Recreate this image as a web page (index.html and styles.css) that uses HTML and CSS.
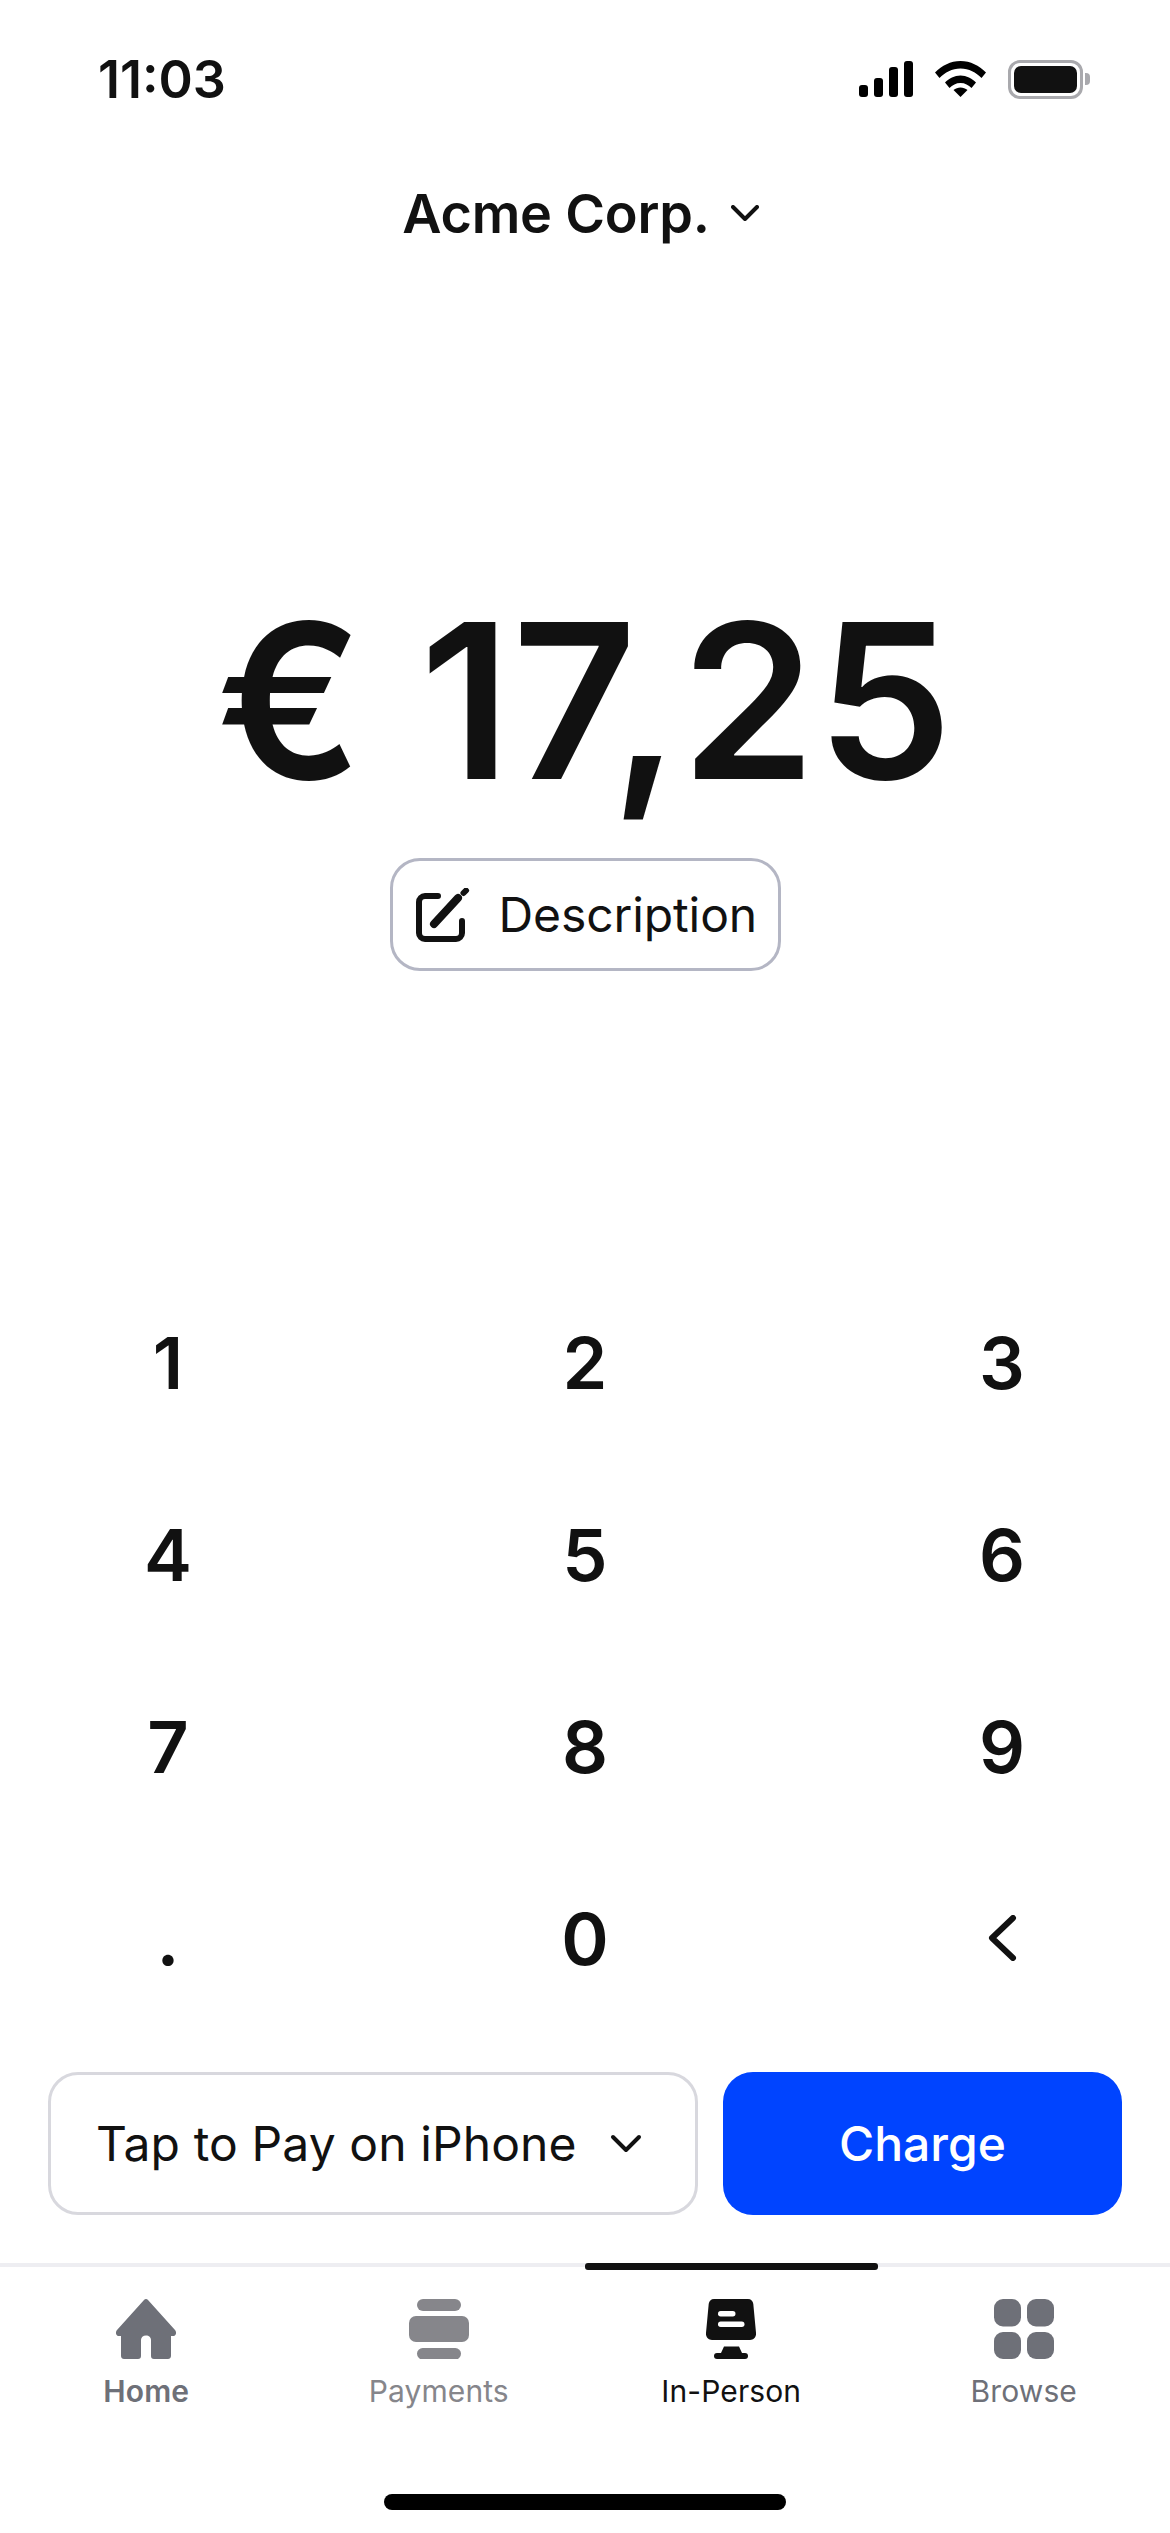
FILE: index.html
```html
<!DOCTYPE html>
<html>
    <head>
        <meta charset="utf-8">
        <title>In-Person</title>
        <link rel="stylesheet" href="styles.css">
    </head>
    <body>
        <div class="screen">
            <div class="status-bar">
                <span class="time">11:03</span>
                <div class="status-icons">
                    <div class="signal"><i></i><i></i><i></i><i></i></div>
                    <svg class="wifi" viewBox="0 0 51 36" width="51" height="36">
                        <path d="M0 11.5C7 4.5 15.5 0 25.5 0S44 4.5 51 11.5L46.5 17C41 11.5 34 7.5 25.5 7.5S10 11.5 4.5 17Z"/>
                        <path d="M10 21.5C14 17.5 19.5 14.5 25.5 14.5S37 17.5 41 21.5L36.5 27C33.5 24 30 22 25.5 22S17.5 24 14.5 27Z"/>
                        <path d="M18.5 29C20.5 27.5 23 26.5 25.5 26.5S30.5 27.5 32.5 29L25.5 36Z"/>
                    </svg>
                    <div class="battery"><div class="battery-level"></div></div>
                </div>
            </div>

            <div class="account">
                <span>Acme Corp.</span>
                <svg class="chevron" viewBox="0 0 28 16" width="28" height="16"><path d="M2 2L14 14L26 2"/></svg>
            </div>

            <div class="charge-amount">
                <div class="amount">€ 17,25</div>
                <button type="button" class="description">
                    <svg viewBox="0 0 54 54" width="54" height="54">
                        <path class="edit-box" d="M22 8H9A6 6 0 0 0 3 14V45A6 6 0 0 0 9 51H40A6 6 0 0 0 46 45V33"/>
                        <path class="edit-pen" d="M18 36L42 10"/>
                        <path class="edit-tip" d="M47.5 5L50 2.5"/>
                    </svg>
                    <span>Description</span>
                </button>
            </div>

            <div class="keypad">
                <button type="button">1</button>
                <button type="button">2</button>
                <button type="button">3</button>
                <button type="button">4</button>
                <button type="button">5</button>
                <button type="button">6</button>
                <button type="button">7</button>
                <button type="button">8</button>
                <button type="button">9</button>
                <button type="button">.</button>
                <button type="button">0</button>
                <button type="button" aria-label="Delete">
                    <svg class="back" viewBox="0 0 30 46" width="30" height="46"><path d="M26 3L5 23L26 43"/></svg>
                </button>
            </div>

            <div class="actions">
                <button type="button" class="reader">
                    <span>Tap to Pay on iPhone</span>
                    <svg class="chevron" viewBox="0 0 32 20" width="32" height="20"><path d="M3 3L16 16L29 3"/></svg>
                </button>
                <button type="button" class="charge">Charge</button>
            </div>

            <nav class="tabs">
                <a class="tab tab-home">
                    <svg viewBox="0 0 60 60" width="60" height="60">
                        <path d="M28 1C29 -0.3 31 -0.3 32 1L59 31C61 33.5 60 37 57 37H55V57C55 59 53.5 60 52 60H38C36 60 35 59 35 57V41C35 38.5 33 36.5 30 36.5S25 38.5 25 41V57C25 59 24 60 22 60H8C6.5 60 5 59 5 57V37H3C0 37 -1 33.5 1 31Z"/>
                    </svg>
                    <span>Home</span>
                </a>
                <a class="tab tab-payments">
                    <svg viewBox="0 0 60 60" width="60" height="60">
                        <rect x="8" y="0" width="44" height="12" rx="6"/>
                        <rect x="0" y="17" width="60" height="26" rx="7"/>
                        <rect x="8" y="49" width="44" height="11.5" rx="5.7"/>
                    </svg>
                    <span>Payments</span>
                </a>
                <a class="tab tab-active">
                    <svg viewBox="0 0 50 60" width="50" height="60">
                        <path d="M8 0H42C45 0 47 2 47.3 5L50 34C50.3 38 48 41 44 41H6C2 41 -0.3 38 0 34L2.7 5C3 2 5 0 8 0Z"/>
                        <rect class="cut" x="12" y="12" width="17.5" height="5.5" rx="2.7"/>
                        <rect class="cut" x="12" y="22.5" width="26.5" height="5.5" rx="2.7"/>
                        <path d="M15 54L18 47.5H33L36 54Z"/>
                        <rect x="8" y="54" width="34" height="6" rx="3"/>
                    </svg>
                    <span>In-Person</span>
                </a>
                <a class="tab tab-browse">
                    <svg viewBox="0 0 60 60" width="60" height="60">
                        <rect x="0" y="0" width="27" height="27.5" rx="9"/>
                        <rect x="33" y="0" width="27" height="27.5" rx="9"/>
                        <rect x="0" y="33" width="27" height="27" rx="9"/>
                        <rect x="33" y="33" width="27" height="27" rx="9"/>
                    </svg>
                    <span>Browse</span>
                </a>
            </nav>

            <div class="home-bar"></div>
        </div>
    </body>
</html>
```

FILE: styles.css
```css
* { box-sizing: border-box; }

html, body {
    margin: 0;
    background: #fff;
}

body {
    color: #111;
    font-family: Inter, "Noto Sans", sans-serif;
}

button {
    background: none;
    border: 0;
    color: inherit;
    font: inherit;
    padding: 0;
}

.screen {
    display: flex;
    flex-direction: column;
    height: 2533px;
    overflow: hidden;
    width: 1170px;
}

/* status bar */
.status-bar {
    align-items: center;
    display: flex;
    height: 158px;
    justify-content: space-between;
    padding: 0 87px 0 98px;
}

.time {
    font-size: 52px;
    font-weight: 600;
}

.status-icons {
    align-items: center;
    display: flex;
    gap: 22px;
}

.signal {
    align-items: flex-end;
    display: flex;
    gap: 6px;
    height: 36px;
    width: 54px;
}

.signal i {
    background: #000;
    border-radius: 3px;
    display: block;
    flex: 1;
}

.signal i:nth-child(1) { height: 12px; }
.signal i:nth-child(2) { height: 19px; }
.signal i:nth-child(3) { height: 30px; }
.signal i:nth-child(4) { height: 36px; }

.wifi { fill: #000; }

.battery {
    border: 3px solid #a9a9ad;
    border-radius: 12px;
    height: 39px;
    padding: 3px;
    position: relative;
    width: 75px;
}

.battery::after {
    background: #a9a9ad;
    border-radius: 0 4px 4px 0;
    content: "";
    height: 12px;
    position: absolute;
    right: -10px;
    top: 10px;
    width: 5px;
}

.battery-level {
    background: #111;
    border-radius: 7px;
    height: 100%;
}

/* account switcher */
.account {
    align-items: center;
    display: flex;
    font-size: 54px;
    font-weight: 600;
    gap: 21px;
    height: 110px;
    justify-content: center;
    letter-spacing: -0.2px;
    padding-right: 9px;
}

.chevron {
    fill: none;
    stroke: #111;
    stroke-linecap: round;
    stroke-linejoin: round;
    stroke-width: 4;
}

/* amount */
.charge-amount {
    align-items: center;
    display: flex;
    flex-direction: column;
    height: 1000px;
    padding-top: 325px;
}

.amount {
    font-size: 216px;
    font-weight: 600;
    letter-spacing: 1.2px;
    line-height: 216px;
}

.description {
    align-items: center;
    border: 3px solid #b4b6c4;
    border-radius: 30px;
    display: flex;
    font-size: 48px;
    gap: 29px;
    height: 113px;
    letter-spacing: -0.1px;
    margin-top: 49px;
    padding: 0 23px;
    width: 391px;
}

.description svg {
    fill: none;
    flex: none;
    stroke: #111;
    stroke-linecap: round;
    stroke-linejoin: round;
}

.edit-box { stroke-width: 6; }
.edit-pen { stroke-width: 8; }
.edit-tip { stroke-width: 6; }

/* keypad */
.keypad {
    display: grid;
    grid-auto-rows: 192px;
    grid-template-columns: repeat(3, 120px);
    justify-content: space-between;
    padding: 0 108px;
}

.keypad button {
    align-items: center;
    display: flex;
    font-size: 72px;
    font-weight: 600;
    justify-content: center;
    padding-bottom: 4px;
}

.back {
    fill: none;
    stroke: #111;
    stroke-linecap: round;
    stroke-linejoin: round;
    stroke-width: 6;
}

/* bottom actions */
.actions {
    display: flex;
    gap: 25px;
    height: 143px;
    margin-top: 36px;
    padding: 0 48px;
}

.reader {
    align-items: center;
    border: 3px solid #d8d8de;
    border-radius: 30px;
    display: flex;
    font-size: 48px;
    gap: 33px;
    letter-spacing: 0.1px;
    padding-left: 45px;
    width: 650px;
}

.charge {
    background: #0044ff;
    border-radius: 30px;
    color: #fff;
    flex: 1;
    font-size: 48px;
    font-weight: 500;
}

/* tab bar */
.tabs {
    border-top: 4px solid #eeeef2;
    display: grid;
    grid-template-columns: repeat(4, 1fr);
    height: 167px;
    margin-top: 48px;
}

.tab {
    align-items: center;
    color: #6e7078;
    display: flex;
    flex-direction: column;
    font-size: 30px;
    gap: 14px;
    letter-spacing: 0.1px;
    padding-top: 32px;
    position: relative;
}

.tab svg {
    display: block;
    fill: currentColor;
}

.tab span { line-height: 36px; }

.tab-home { font-weight: 600; }

.tab-payments { color: #86868b; }

.tab-active { color: #111; }

.tab-active::before {
    background: #111;
    border-radius: 3px;
    content: "";
    height: 7px;
    left: 0;
    position: absolute;
    right: 0;
    top: -4px;
}

.cut { fill: #fff; }

.home-bar {
    align-self: center;
    background: #000;
    border-radius: 8px;
    height: 16px;
    margin-top: 64px;
    width: 402px;
}
```
